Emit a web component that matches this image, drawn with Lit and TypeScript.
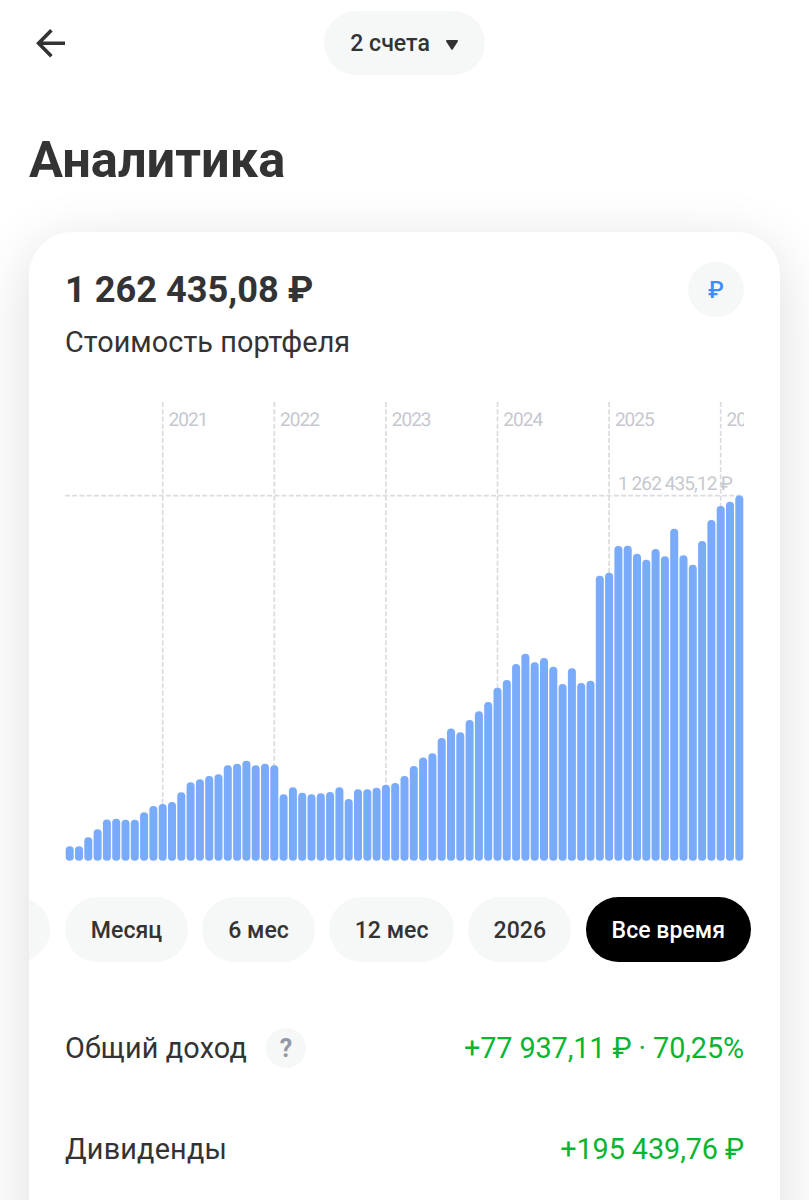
import { LitElement, html, svg, css } from "lit";
import { customElement } from "lit/decorators.js";

// Top edge of each monthly bar, in chart coordinates (chart height 460).
const BAR_TOPS = [
  444.3, 444.3, 435.3, 427.3, 417.5, 416.7, 417.7, 417.7, 410.3, 404, 402, 400, 390.3, 380.3, 377.3, 374, 372.3,
  363.3, 361.7, 358.7, 363.3, 361.7, 363.3, 392.3, 385.3, 390.7, 392.3, 391.3, 390, 385.3, 397, 387.3, 387.3,
  385.7, 382.7, 381, 374, 364, 355.5, 351.3, 336, 326.5, 330.3, 318, 309.3, 300, 285.7, 278, 262, 251.7, 260.3,
  256, 264.7, 282, 266.3, 281, 278.7, 173.7, 170.7, 144, 143.7, 151.7, 157.7, 147, 154.3, 126.7, 153.3, 162.7,
  139, 118, 104, 99.7, 93.5,
];
const PITCH = 9.3;
const BAR_WIDTH = 8;
const BASELINE = 458.7;
const YEARS = [2021, 2022, 2023, 2024, 2025, 2026];

@customElement("portfolio-chart")
class PortfolioChart extends LitElement {
  static styles = css`
    :host { display: block; height: 460px; }
    svg { display: block; overflow: hidden; }
    .grid { stroke: #dbdcdf; stroke-width: 1.7; stroke-dasharray: 5 2.22; fill: none; }
    .bar { fill: #7aabfb; }
    .label { fill: #c5c8ce; font: 400 19px Roboto, sans-serif; letter-spacing: -0.95px; text-rendering: geometricPrecision; }
    .peak { letter-spacing: -0.9px; }
  `;
  render() {
    const center = (i: number) => 4.7 + i * PITCH;
    return html`<svg width="679" height="460" viewBox="0 0 679 460">
      ${YEARS.map((year, i) => {
        const x = center(10 + i * 12);
        return svg`<path class="grid" d="M${x} 0V458"/><text class="label" x=${x + 5.8} y="24.2">${year}</text>`;
      })}
      <path class="grid" d="M0 93.7H679" />
      <text class="label peak" x="553" y="88.3">1 262 435,12 ₽</text>
      ${BAR_TOPS.map(
        (top, i) => svg`<rect class="bar" x=${center(i) - BAR_WIDTH / 2} y=${top} width=${BAR_WIDTH}
          height=${BASELINE - top} rx="3.8"/>`
      )}
    </svg>`;
  }
}

@customElement("app-root")
class AppRoot extends LitElement {
  static styles = css`
    :host { display: block; height: 1200px; overflow: hidden; background: #fff; color: #333; font-family: Roboto, sans-serif; }
    * { box-sizing: border-box; }
    header { display: grid; grid-template-columns: 1fr auto 1fr; align-items: center; padding: 11px 29px 0; height: 75px; }
    .back { display: block; margin-left: 6px; }
    .accounts { display: flex; align-items: center; gap: 15px; height: 64px; padding: 1px 25px 0 26px; width: 160.5px;
      border-radius: 32px; background: #f6f8f8; font-size: 23.1px; font-weight: 500; white-space: nowrap; }
    .accounts svg { flex: none; margin-top: 2px; }
    h1 { margin: 55px 0 0 29px; font-size: 50.6px; line-height: 60px; font-weight: 700; white-space: nowrap; }
    .card { margin: 42px 29px 0; height: 1040px; border-radius: 43px; background: #fff; overflow: hidden; padding: 30px 36px 0;
      box-shadow: 0 14px 60px rgba(0, 0, 0, 0.14); }
    .top { display: flex; justify-content: space-between; height: 140px; }
    .amount { font-size: 36.2px; line-height: 42px; font-weight: 700; margin-top: 7px; white-space: nowrap; }
    .caption { font-size: 28.8px; letter-spacing: 0.07px; line-height: 36px; margin-top: 13px; white-space: nowrap; }
    .currency { display: flex; align-items: center; justify-content: center; width: 56px; height: 55px; border-radius: 50%;
      background: #f6f8f8; color: #428bf9; font-size: 23.1px; font-weight: 500; padding-top: 1px; }
    .chips { display: flex; gap: 14.4px; margin: 35px -36px 0; height: 65px; }
    .chip { flex: none; display: flex; align-items: center; justify-content: center; height: 65px; border-radius: 33px;
      background: #f6f8f8; font-size: 23.1px; font-weight: 500; padding-top: 2px; white-space: nowrap; }
    .stub { width: 65px; margin-left: -43.9px; }
    .month { width: 123px; margin-left: 0.5px; }
    .half { width: 112.3px; }
    .twelve { width: 125px; }
    .year { width: 102.8px; }
    .all { width: 165.3px; background: #000; color: #fff; }
    .row { display: flex; align-items: center; justify-content: space-between; height: 40px; font-size: 28.8px;
      letter-spacing: 0.18px; white-space: nowrap; }
    .income { margin-top: 66px; }
    .dividends { margin-top: 61px; }
    .name { display: flex; align-items: center; gap: 19px; }
    .help { display: flex; align-items: center; justify-content: center; width: 40px; height: 40px; border-radius: 50%;
      background: #f6f8f8; color: #9299a5; font-size: 25px; font-weight: 700; }
    .gain { color: #08b530; letter-spacing: -0.09px; }
  `;
  render() {
    return html`
      <header>
        <svg class="back" width="32" height="32" viewBox="0 0 32 32" fill="none" stroke="#333" stroke-width="3.6">
          <path d="M30 16.3H3M16.4 3.2L3.6 16.3l12.8 12.9" />
        </svg>
        <div class="accounts">
          <span>2 счета</span>
          <svg width="14" height="12" viewBox="0 0 14 12">
            <path d="M2 2h10L7 9.6Z" fill="#333" stroke="#333" stroke-width="2" stroke-linejoin="round" />
          </svg>
        </div>
      </header>
      <h1>Аналитика</h1>
      <section class="card">
        <div class="top">
          <div>
            <div class="amount">1 262 435,08 ₽</div>
            <div class="caption">Стоимость портфеля</div>
          </div>
          <div class="currency">₽</div>
        </div>
        <portfolio-chart></portfolio-chart>
        <div class="chips">
          <div class="chip stub"></div>
          <div class="chip month">Месяц</div>
          <div class="chip half">6 мес</div>
          <div class="chip twelve">12 мес</div>
          <div class="chip year">2026</div>
          <div class="chip all">Все время</div>
        </div>
        <div class="row income">
          <div class="name"><span>Общий доход</span><span class="help">?</span></div>
          <span class="gain">+77 937,11 ₽ · 70,25%</span>
        </div>
        <div class="row dividends">
          <span>Дивиденды</span>
          <span class="gain">+195 439,76 ₽</span>
        </div>
      </section>
    `;
  }
}
